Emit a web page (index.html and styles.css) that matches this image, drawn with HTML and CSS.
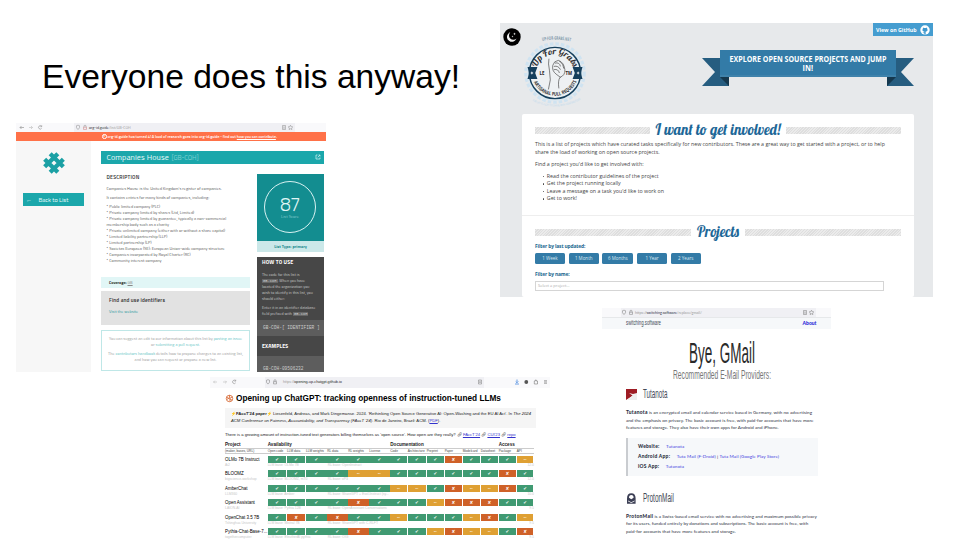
FILE: index.html
```
<!DOCTYPE html>
<html lang="en">
<head>
<meta charset="utf-8">
<title>Everyone does this anyway!</title>
<link rel="stylesheet" href="styles.css">
</head>
<body>
<main class="slide">
<h1 class="slide-title">Everyone does this anyway!</h1>

<section class="shot org">
  <div class="org-bar">
    <svg class="nav" viewBox="0 0 30 9"><g fill="none" stroke="#888" stroke-width=".6"><path d="M8 4.500H4M5.500 3 4 4.500 5.500 6"/><path stroke="#bbb" d="M13 4.500h3.500M15 3l1.500 1.500L15 6"/><path d="M25.500 3.200a1.700 1.700 0 1 0 .1 2.200M25.700 2.300v1.400h-1.400"/></g></svg>
    <div class="org-url">
      <svg class="lock" viewBox="0 0 14 9"><g fill="none" stroke="#888" stroke-width=".5"><path d="M1.500 2.700 3 2.200l1.500.5v2Q4 6 3 6.500 2 6 1.500 4.700z"/><path d="M9 4.200v-1a1 1 0 0 1 2 0v1"/><path stroke="#c77" d="M8.500 4.200h3v2.200h-3z"/></g></svg>
      <span>org-id.guide<i>/list/GB-COH</i></span>
      <svg class="star" viewBox="0 0 14 9"><g fill="none" stroke="#888" stroke-width=".5"><path d="M1.500 2.500h3v4h-3zM2.200 4h1.600M2.200 5.200h1.600"/><path d="m9.500 2.200.7 1.500 1.600.2-1.200 1.100.3 1.600-1.400-.8-1.400.8.3-1.600-1.200-1.100 1.600-.2z"/></g></svg>
    </div>
  </div>
  <div class="org-alert"><b class="info">i</b><span>org-id.guide has turned 4! A load of research goes into org-id.guide - find out <u>how you can contribute</u>.</span></div>
  <div class="org-body">
    <aside class="org-side">
      <svg class="org-logo" viewBox="0 0 24 24"><g transform="rotate(45 12 12)" stroke="#1ba0a4" stroke-width="4.300" fill="none"><path d="M2.700 8.100h18.600M2.700 15.900h18.600M8.100 2.700v18.600M15.900 2.700v18.600"/></g></svg>
      <div class="back"><span>←</span>Back to List</div>
    </aside>
    <div class="org-main">
      <header class="org-head"><span>Companies House</span><em>[GB-COH]</em><svg viewBox="0 0 6 6"><path fill="none" stroke="#d8f3f3" stroke-width=".7" d="M2.500 1H1v4h4V3.500M3.500 1H5v1.500M5 1 2.700 3.300"/></svg></header>
      <div class="org-cols">
        <article class="org-text">
          <h2>DESCRIPTION</h2>
          <p class="d1">Companies House is the United Kingdom's register of companies.</p>
          <p class="d2">It contains entries for many kinds of companies, including:</p>
          <p class="list">* Public limited company (PLC)<br>* Private company limited by shares (Ltd, Limited)<br>* Private company limited by guarantee, typically a non-commercial<br>membership body such as a charity<br>* Private unlimited company (either with or without a share capital)<br>* Limited liability partnership (LLP)<br>* Limited partnership (LP)<br>* Societas Europaea (SE): European Union-wide company structure<br>* Companies incorporated by Royal Charter (RC)<br>* Community interest company</p>
          <div class="cover"><b>Coverage:</b> <u>GB</u></div>
          <div class="find"><b>Find and use identifiers</b><a>Visit the website</a></div>
          <div class="suggest"><p>You can suggest an edit to our information about this list by <a>posting an issue</a><br>or <a>submitting a pull request</a>.</p><p>The <a>contributors handbook</a> details how to propose changes to an existing list,<br>and how you can request or propose a new list.</p></div>
        </article>
        <aside class="org-info">
          <div class="score"><div class="ring"><strong>87</strong><span>List Score</span></div></div>
          <div class="type">List Type: primary</div>
          <div class="how">
            <h3>HOW TO USE</h3>
            <p>The code for this list is<br><code>GB-COH</code>. When you have<br>located the organization you<br>wish to identify in this list, you<br>should either:</p>
            <p>Enter it in an identifier database<br>field prefixed with <code>GB-COH</code></p>
          </div>
          <div class="strip">GB-COH-[ IDENTIFIER ]</div>
          <h3 class="ex">EXAMPLES</h3>
          <div class="strip last">GB-COH-09506232</div>
        </aside>
      </div>
    </div>
  </div>
</section>

<section class="shot grabs">
  <header class="g-head">
    <svg class="moon" viewBox="0 0 18 18"><circle cx="9" cy="9" r="8.700" fill="#000"/><path fill="#eee" d="M7.300 4.300a4.900 4.900 0 1 0 6.200 6.300 4.300 4.300 0 0 1-6.200-6.300z"/><path fill="#eee" d="m11.500 4.500.4 1 1 .4-1 .4-.4 1-.4-1-1-.4 1-.4zM9.500 7.500l.3.7.7.3-.7.3-.3.7-.3-.7-.7-.3.7-.3z"/></svg>
    <svg class="badge" viewBox="0 0 60 78">
      <defs><path id="top" d="M13 40a17 17 0 0 1 34 0"/><path id="low" d="M8.800 39.500a21.200 21.200 0 0 0 42.400 0"/><path id="crown" d="M3 15.500Q30 4 57 15.500"/><path id="foot" d="M4 62.500q26 16 52 0"/></defs>
      <circle cx="30" cy="40" r="26.500" fill="none" stroke="#cfe3f1" stroke-width="3" stroke-dasharray="3.200 1.800"/>
      <circle cx="30" cy="40" r="25.500" fill="#dbe8f1"/>
      <circle cx="30" cy="40" r="23.300" fill="#eef1f3" stroke="#153f5c" stroke-width="1.300"/>
      <path fill="#153f5c" d="M5 34.500h9l-2 5.500 2 5.500H5l1.500-5.500zM55 34.500h-9l2 5.500-2 5.500h9l-1.500-5.500z"/>
      <path fill="#fff" d="m9 38.500.5 1 1 .5-1 .5-.5 1-.5-1-1-.5 1-.5zM51 38.500l.5 1 1 .5-1 .5-.5 1-.5-1-1-.5 1-.5z"/>
      <path fill="none" stroke="#444" stroke-width=".6" d="M24 55q3-9 1-17-1.500-7-.5-11M33.500 54q-1-7 1-10 5-2 4.500-7-1-7-6-8.500-4 .5-5 4.500-1 5 3 8l4 3M30 31q4-1 5 3M29 34q4-1 6 3M29 37q4-1 5 3M34 29q4 3 4 7"/>
      <text class="script" font-size="7.800"><textPath href="#top" startOffset="5" textLength="43" lengthAdjust="spacingAndGlyphs">Up For Grabs</textPath></text>
      <text class="cond" font-size="4.600" fill="#333"><textPath href="#low" startOffset="9" textLength="49" lengthAdjust="spacingAndGlyphs">ARTISANAL PULL REQUESTS</textPath></text>
      <text class="cond" font-size="4.400" fill="#8299ac"><textPath href="#crown" startOffset="16" textLength="26" lengthAdjust="spacingAndGlyphs">UP-FOR-GRABS.NET</textPath></text>
      <text font-size="2.600" fill="#b9d8ec"><textPath href="#foot" startOffset="6" textLength="46" lengthAdjust="spacingAndGlyphs">FOR LIFE IS A GIFT TO SHARE WITH CONTRIBUTORS</textPath></text>
      <text class="cond" x="16" y="41.500" font-size="4" fill="#222">LE</text><text class="cond" x="39.500" y="41.500" font-size="4" fill="#222">TM</text>
    </svg>
    <svg class="ribbon" viewBox="0 0 212 37"><path fill="#265d80" d="M0 8h27v28H0l13-14zM212 8h-27v28h27l-13-14z"/><path fill="#15384e" d="M18 27h9v9zM194 27h-9v9z"/><path fill="#337ba7" d="M18 0h176v27H18z"/><path stroke="#6699b8" stroke-width=".5" d="M18 26h176"/>
      <text class="cond" x="27.500" y="11.500" font-size="8.800" fill="#fff" textLength="157" lengthAdjust="spacingAndGlyphs">EXPLORE OPEN SOURCE PROJECTS AND JUMP</text><text class="cond" x="100.500" y="20.500" font-size="8.800" fill="#fff" textLength="10.500" lengthAdjust="spacingAndGlyphs">IN!</text></svg>
    <div class="gh"><span>View on GitHub</span><svg viewBox="0 0 10 10"><circle cx="5" cy="5" r="4.700" fill="#fff"/><path fill="#3d98ce" d="M3 2.500l1 .4h2l1-.4.1 1.100q1.400 2.800-1.500 3.200l.1 2.600H4.300l.1-1.200q-1.500.2-1.700-1 .8.300 1.700.1V6.800Q1.500 6.400 2.900 3.600z"/></svg></div>
  </header>
  <div class="card">
    <div class="rule"><i></i><svg class="inv" viewBox="0 0 136 20"><text class="script" x="5.500" y="14.500" font-size="16" textLength="125" lengthAdjust="spacingAndGlyphs">I want to get involved!</text></svg><i></i></div>
    <p class="intro">This is a list of projects which have curated tasks specifically for new contributors. These are a great way to get started with a project, or to help<br>share the load of working on open source projects.</p>
    <p>Find a project you'd like to get involved with:</p>
    <ul><li>Read the contributor guidelines of the project</li><li>Get the project running locally</li><li>Leave a message on a task you'd like to work on</li><li>Get to work!</li></ul>
    <hr>
    <div class="rule proj"><i></i><svg class="pro" viewBox="0 0 54 20"><text class="script" x="6" y="14" font-size="16" textLength="42" lengthAdjust="spacingAndGlyphs">Projects</text></svg><i></i></div>
    <h4>Filter by last updated:</h4>
    <div class="btns"><span>1 Week</span><span>1 Month</span><span class="wide">6 Months</span><span>1 Year</span><span>2 Years</span></div>
    <h4>Filter by name:</h4>
    <div class="select">Select a project...</div>
  </div>
</section>

<section class="shot gpt">
  <div class="gpt-bar">
    <svg class="nav" viewBox="0 0 30 10"><g fill="none" stroke="#888" stroke-width=".6"><path stroke="#bbb" d="M7 5H3.500M4.800 3.700 3.500 5l1.300 1.300M13 5h3.500M15.200 3.700 16.500 5l-1.300 1.300"/><path d="M25.500 3.700a1.700 1.700 0 1 0 .1 2.200M25.700 2.700v1.400h-1.400"/></g></svg>
    <div class="gpt-url"><svg viewBox="0 0 14 10"><g fill="none" stroke="#777" stroke-width=".5"><path d="M1.500 3.200 3 2.700l1.500.5v2Q4 6.500 3 7 2 6.500 1.500 5.200zM9 4.700v-1a1 1 0 0 1 2 0v1M8.500 4.700h3v2.200h-3z"/></g></svg><span><i>https://</i>opening-up-chatgpt.github.io</span><svg class="end" viewBox="0 0 6 10"><path fill="none" stroke="#777" stroke-width=".5" d="M1.500 3h3v4h-3zM2.200 4.300h1.600M2.200 5.500h1.600"/></svg></div>
    <svg class="tools" viewBox="0 0 36 10"><path fill="none" stroke="#4b8be0" stroke-width=".8" d="M5 2.500v3M3.700 4.500 5 5.800l1.300-1.300M3 7h4"/><circle cx="14.300" cy="5" r="1.900" fill="#555"/><path fill="none" stroke="#777" stroke-width=".6" d="M22.300 4h1v-1h1v1h1.200v3h-3.200zM32 3.700h3M32 5h3M32 6.300h3"/></svg>
  </div>
  <div class="gpt-body">
    <h2><svg viewBox="0 0 10 10"><g fill="none" stroke="#d96f3d" stroke-width="1"><circle cx="5" cy="5" r="3.600"/><path d="M5 1.200v3L2.200 6M8.300 3.200 5.500 4.700v3.700M1.700 3.500 5 5.300 8 7"/></g></svg><span>Opening up ChatGPT: tracking openness of instruction-tuned LLMs</span></h2>
    <div class="cite"><p class="c1"><b class="bolt">⚡</b><b>FAccT'24 paper</b><b class="bolt">⚡</b> Liesenfeld, Andreas, and Mark Dingemanse. 2024. ‘Rethinking Open Source Generative AI: Open-Washing and the EU AI Act’. In <i>The 2024</i></p><p class="c2"><i>ACM Conference on Fairness, Accountability, and Transparency (FAccT ’24)</i>. Rio de Janeiro, Brazil: ACM. (<a>PDF</a>).</p></div>
    <p class="grow">There is a growing amount of instruction-tuned text generators billing themselves as ‘open source’. How open are they really? 🔗︎ <a>FAccT'24</a> 🔗︎ <a>CUI'23</a> 🔗︎ <a>repo</a></p>
    <div class="row groups"><b>Project</b><b class="av">Availability</b><b class="doc">Documentation</b><b>Access</b></div>
    <div class="row heads"><span>(maker, bases, URL)</span><span>Open code</span><span>LLM data</span><span>LLM weights</span><span>RL data</span><span>RL weights</span><span>License</span><span>Code</span><span>Architecture</span><span>Preprint</span><span>Paper</span><span>Modelcard</span><span>Datasheet</span><span>Package</span><span>API</span></div>

    <div class="row cells"><b>OLMo 7B Instruct</b><i class="y">✔</i><i class="y">✔</i><i class="y">✔</i><i class="y">✔</i><i class="y">✔</i><i class="y">✔</i><i class="y">✔</i><i class="y">✔</i><i class="y">✔</i><i class="n">✘</i><i class="y">✔</i><i class="y">✔</i><i class="y">✔</i><i class="p">~</i></div>
    <div class="sub"><span>Ai2</span><span>LLM base: OLMo 7B</span><span>RL base: OpenInstruct</span><em>12.0</em></div>
    <div class="row cells"><b>BLOOMZ</b><i class="y">✔</i><i class="y">✔</i><i class="y">✔</i><i class="y">✔</i><i class="p">~</i><i class="p">~</i><i class="y">✔</i><i class="y">✔</i><i class="y">✔</i><i class="y">✔</i><i class="y">✔</i><i class="y">✔</i><i class="n">✘</i><i class="y">✔</i></div>
    <div class="sub"><span>bigscience-workshop</span><span>LLM base: BLOOMZ, mT0</span><span>RL base: xP3</span><em>12.0</em></div>
    <div class="row cells"><b>AmberChat</b><i class="y">✔</i><i class="y">✔</i><i class="y">✔</i><i class="y">✔</i><i class="y">✔</i><i class="y">✔</i><i class="p">~</i><i class="p">~</i><i class="y">✔</i><i class="n">✘</i><i class="p">~</i><i class="p">~</i><i class="n">✘</i><i class="y">✔</i></div>
    <div class="sub"><span>LLM360</span><span>LLM base: Amber</span><span>RL base: ShareGPT + Evol-Instruct (sy...</span><em>10.0</em></div>
    <div class="row cells"><b>Open Assistant</b><i class="y">✔</i><i class="y">✔</i><i class="y">✔</i><i class="y">✔</i><i class="n">✘</i><i class="y">✔</i><i class="y">✔</i><i class="y">✔</i><i class="p">~</i><i class="n">✘</i><i class="n">✘</i><i class="n">✘</i><i class="y">✔</i><i class="y">✔</i></div>
    <div class="sub"><span>LAION-AI</span><span>LLM base: Pythia 12B</span><span>RL base: OpenAssistant Conversations</span><em>9.5</em></div>
    <div class="row cells"><b>OpenChat 3.5 7B</b><i class="y">✔</i><i class="n">✘</i><i class="y">✔</i><i class="n">✘</i><i class="y">✔</i><i class="y">✔</i><i class="p">~</i><i class="y">✔</i><i class="y">✔</i><i class="y">✔</i><i class="p">~</i><i class="n">✘</i><i class="y">✔</i><i class="p">~</i></div>
    <div class="sub"><span>Tshinghua University</span><span>LLM base: Mistral 7B</span><span>RL base: ShareGPT with C-RLFT</span><em>9.5</em></div>
    <div class="row cells"><b>Pythia-Chat-Base-7...</b><i class="y">✔</i><i class="y">✔</i><i class="y">✔</i><i class="y">✔</i><i class="n">✘</i><i class="y">✔</i><i class="y">✔</i><i class="y">✔</i><i class="p">~</i><i class="n">✘</i><i class="p">~</i><i class="p">~</i><i class="y">✔</i><i class="n">✘</i></div>
    <div class="sub"><span>togethercomputer</span><span>LLM base: EleutherAI pythia</span><span>RL base: OIG</span><em>9.5</em></div>
  </div>
</section>

<section class="shot sw">
  <div class="sw-bar"><div class="sw-url"><svg viewBox="0 0 14 9"><g fill="none" stroke="#777" stroke-width=".5"><path d="M1.500 2.700 3 2.200l1.500.5v2Q4 6 3 6.500 2 6 1.500 4.700zM9 4.200v-1a1 1 0 0 1 2 0v1M8.500 4.200h3v2.200h-3z"/></g></svg><span><i>https://</i>switching.software<i>/replace/gmail/</i></span><svg class="end" viewBox="0 0 14 9"><g fill="none" stroke="#777" stroke-width=".5"><path d="M1.500 2.500h3v4h-3zM2.200 4h1.600M2.200 5.200h1.600"/><path d="m9.500 2.200.7 1.500 1.600.2-1.200 1.100.3 1.600-1.400-.8-1.400.8.3-1.600-1.200-1.100 1.600-.2z"/></g></svg></div></div>
  <header class="sw-head"><svg viewBox="0 0 36 12"><text class="thin" transform="translate(0 8) scale(1 1.250)" font-size="6.500" textLength="35" lengthAdjust="spacingAndGlyphs">switching.software</text></svg><b>About</b></header>
  <div class="sw-body">
    <svg class="bye" viewBox="0 0 100 54"><text class="thin" transform="translate(17 28.500) scale(1 1.900)" font-size="15.500" textLength="66" lengthAdjust="spacingAndGlyphs">Bye, GMail</text><text class="thin" transform="translate(1 45) scale(1 1.500)" font-size="8" textLength="98" lengthAdjust="spacingAndGlyphs">Recommended E-Mail Providers:</text></svg>
    <h3 class="t"><svg class="ic" viewBox="0 0 11 11"><path fill="#9e1c24" d="M0 0h11v5L5.500 7.500 0 11z"/><path fill="#eee" d="M3 4l4 1 4-1v7H1l5.500-4.500z"/></svg><svg class="nm" viewBox="0 0 34 14"><text class="thin" transform="translate(0 11.200) scale(1 1.600)" font-size="7.500" textLength="24.500" lengthAdjust="spacingAndGlyphs">Tutanota</text></svg></h3>
    <p class="t1"><span><b>Tutanota</b> is an encrypted email and calendar service based in Germany, with no advertising</span><br>and the emphasis on privacy. The basic account is free, with paid-for accounts that have more<br>features and storage. They also have their own apps for Android and iPhone.</p>
    <div class="links"><p><b>Website:</b><a>Tutanota</a></p><p><b>Android App:</b><a>Tuta Mail (F-Droid)</a> | <a class="nx">Tuta Mail (Google Play Store)</a></p><p><b>iOS App:</b><a>Tutanota</a></p></div>
    <h3 class="pm"><svg class="ic" viewBox="0 0 11 11"><path fill="#3c3f55" d="M1 5.500Q1 .3 5.300.3T9.600 5.500v5.200H1z"/><path fill="#fff" d="M3 4.800q0-2.700 2.300-2.700t2.300 2.700L5.300 6.200zM2 7.500l3.300 1.800L8.600 7.500v.7L5.300 10 2 8.200z"/></svg><svg class="nm" viewBox="0 0 34 14"><text class="thin" transform="translate(0 11.200) scale(1 1.600)" font-size="7.500" textLength="31" lengthAdjust="spacingAndGlyphs">ProtonMail</text></svg></h3>
    <p class="t2"><span><b>ProtonMail</b> is a Swiss-based email service with no advertising and maximum possible privacy</span><br>for its users, funded entirely by donations and subscriptions. The basic account is free, with<br>paid-for accounts that have more features and storage.</p>
  </div>
</section>
</main>
</body>
</html>
```

FILE: styles.css
```
* { box-sizing: border-box; margin: 0; padding: 0; }
body { background: #fff; font-family: "Liberation Sans", sans-serif; }
svg { display: block; flex: none; overflow: visible; }
i { font-style: normal; }
.slide { position: relative; width: 960px; height: 540px; overflow: hidden; }
.slide-title { padding: 56px 0 0 42px; font-weight: 400; font-size: 33.600px; line-height: 41px; white-space: nowrap; color: #000; }
.shot { position: absolute; overflow: hidden; white-space: nowrap; background: #fff; }

/* org-id.guide */
.org { left: 16px; top: 123px; width: 310px; height: 249px; font-family: "Titillium Web", "Open Sans", sans-serif; color: #555; }
.org-bar { display: flex; height: 9px; background: #f9f9fb; }
.org-bar .nav { width: 30px; height: 9px; margin-right: 28px; }
.org-url { display: flex; align-items: center; width: 221px; background: #f0f0f4; font-size: 3.900px; color: #222; }
.org-url svg { width: 14px; height: 9px; margin-left: 1px; }
.org-url i { color: #999; }
.org-url .star { margin-left: auto; }
.org-alert { display: flex; align-items: center; height: 9px; padding-left: 86px; background: #ff7148; color: #fff; font-size: 3.900px; font-weight: 600; letter-spacing: .015px; }
.info { width: 4.500px; height: 4.500px; margin-right: 1px; border: .6px solid #fff; border-radius: 50%; font-size: 3px; line-height: 3.300px; text-align: center; }
.org-body { display: flex; height: 231px; }
.org-side { width: 75px; background: #f7f7f7; padding: 10px 7px; }
.org-logo { width: 24px; height: 24px; margin: 0 0 18px 18.500px; }
.back { display: flex; align-items: center; height: 13px; background: #1ba7ab; color: #e8fafa; font-size: 6.200px; letter-spacing: -.02px; }
.back span { width: 15.500px; padding-left: 3px; font-size: 6px; }
.org-main { width: 223px; margin-left: 10px; padding-top: 10px; }
.org-head { display: flex; align-items: center; height: 13px; padding: 0 3.500px 0 5.500px; background: #1ba7ab; color: #eafafa; font-size: 8px; letter-spacing: .13px; line-height: 11px; padding-bottom: 1px; }
.org-head em { margin-left: 2.500px; font-style: normal; color: #7bd0d2; font-size: 6.700px; letter-spacing: -.1px; }
.org-head svg { width: 6px; height: 6px; margin-left: auto; }
.org-cols { display: flex; justify-content: space-between; }
.org-text { width: 149px; }
.org-text h2 { padding: 10px 0 0 5.500px; font-size: 5.200px; line-height: 7px; font-weight: 600; color: #333; letter-spacing: .22px; }
.d1, .d2, .list { padding-left: 5.500px; font-size: 4.200px; letter-spacing: .02px; }
.d1 { margin-top: 5px; line-height: 6px; }
.d2 { margin-top: 3px; line-height: 6px; }
.list { margin-top: 2.500px; line-height: 6.080px; }
.cover { height: 11px; margin-top: 12.700px; padding-left: 8px; background: #e1f6f6; font-size: 4.200px; line-height: 11px; letter-spacing: -.02px; color: #333; }
.cover u { color: #888; }
.find { height: 34px; margin-top: 3px; padding: 6.500px 8px; background: #e2e2e2; font-size: 5.300px; line-height: 7px; color: #333; letter-spacing: .13px; }
.find b { font-weight: 600; }
.find a { display: block; margin-top: 4px; font-size: 4.100px; letter-spacing: .03px; }
.org-text a { color: #24979b; }
.suggest { height: 41px; margin-top: 5px; padding-top: 5px; border: 1px solid #bfe7e7; text-align: center; font-size: 4.100px; line-height: 6px; color: #999; letter-spacing: .03px; }
.suggest p { margin-bottom: 2.700px; }
.org-text .suggest a { color: #5cbfc2; }
.org-info { width: 67px; margin-top: 10px; }
.score { height: 67px; padding: 7px; background: #138d90; }
.ring { display: flex; flex-direction: column; align-items: center; width: 52px; height: 52px; border: 1.300px solid #d8f2f2; border-radius: 50%; color: #e0f6f6; }
.ring strong { margin-top: 12px; font-weight: 300; font-size: 18.500px; line-height: 20px; letter-spacing: -.5px; }
.ring span { font-size: 4.400px; line-height: 5px; color: #8accce; }
.type { height: 11px; background: #cbe8e9; color: #17898c; font-size: 4.200px; line-height: 11px; font-weight: 700; text-align: center; letter-spacing: .03px; }
.how { height: 63px; margin-top: 5px; padding-left: 5px; background: #474747; color: #ccc; font-size: 3.900px; line-height: 6.150px; letter-spacing: .04px; }
.how h3, .ex { font-size: 5.300px; line-height: 10px; font-weight: 700; color: #fff; letter-spacing: .15px; }
.how p { margin-top: 2.400px; }
.how h3 + p { margin-top: 4.800px; }
code { padding: 0 1px; background: #666; font: 3.700px/4px "Liberation Mono", monospace; }
.strip { height: 16px; padding-left: 6px; background: #5d5d5d; color: #ccc; font: 4.500px/15px "Liberation Mono", monospace; }
.ex { height: 20px; padding: 5px 0 0 5px; background: #474747; }
.last { line-height: 25px; }

/* up-for-grabs.net */
.grabs { left: 500px; top: 23px; width: 433px; height: 274px; background: #e7e9eb; font-family: "Open Sans", sans-serif; color: #444; }
.g-head { display: flex; height: 91px; }
.moon { width: 18px; height: 18px; margin: 5px 0 0 3px; }
.badge { width: 66px; height: 85.800px; margin: 6px 0 0 .5px; }
.ribbon { width: 212px; height: 37px; margin: 27px 0 0 114px; }
.gh { display: flex; align-items: center; justify-content: flex-end; width: 60.500px; height: 13px; margin-left: -41px; padding-right: 3px; background: #459dd0; color: #fff; font-size: 5.250px; font-weight: 700; }
.gh svg { width: 10px; height: 10px; margin-left: 3.500px; }
.cond { font-family: "Open Sans", sans-serif; font-weight: 700; }
.script { font-family: "Lobster", "Liberation Serif", serif; font-weight: 400; fill: #1d6797; }
.badge .script { fill: #333; }
.card { width: 392px; height: 183px; margin-left: 22px; padding: 6px 13px 0; background: #fff; border-radius: 2px; font-size: 5.280px; line-height: 7.400px; }
.rule { display: flex; align-items: center; height: 20px; }
.rule i { flex: 1; height: 7px; background: repeating-linear-gradient(135deg, #dedede 0 1px, #ebebeb 1px 2px); }
.inv { width: 136px; height: 20px; }
.pro { width: 54px; height: 20px; }
.card p { margin-bottom: 4.400px; }
.card .intro { margin-top: 1.300px; }
ul { list-style: none; margin-top: 4.800px; }
li { display: flex; align-items: center; padding-left: 7.500px; line-height: 7.530px; }
li::before { content: ""; width: 1.800px; height: 1.800px; margin-right: 2.500px; border-radius: 50%; background: #444; }
hr { height: 1px; margin: 12.500px -13px 6.500px; border: 0; background: #eee; }
h4 { font-size: 4.900px; line-height: 7px; letter-spacing: -.14px; color: #21678f; }
.btns { display: flex; gap: 3.700px; margin: 3px 0 7px; }
.btns span { width: 30px; height: 11.500px; border-radius: 1.500px; background: #337ba7; color: #d9e8f1; font-size: 4.500px; line-height: 11.500px; text-align: center; }
.btns .wide { width: 31px; }
.select { width: 349px; height: 10.500px; margin-top: 2.500px; padding-left: 2px; border: 1px solid #d5d5d5; font-size: 4px; line-height: 8.500px; color: #aaa; }

/* opening-up-chatgpt */
.gpt { left: 210px; top: 377px; width: 340px; height: 163px; color: #222; }
.gpt-bar { display: flex; height: 10.500px; background: #f9f9fb; font-size: 3.750px; }
.gpt-bar .nav { width: 30px; height: 10px; }
.gpt-url { display: flex; align-items: center; width: 219px; margin-left: 25px; background: #f0f0f4; }
.gpt-url svg { width: 14px; height: 10px; }
.gpt-url span { margin-left: 4px; }
.gpt-url i, .sw-url i { color: #999; }
.gpt-url .end { width: 6px; margin: 0 1px 0 auto; }
.tools { width: 36px; height: 10px; margin-left: 28px; }
.gpt-body { padding: 4px 15px 0; }
.gpt h2 { display: flex; align-items: center; height: 13px; font-size: 8.280px; color: #000; }
.gpt h2 svg { width: 9px; height: 9px; margin-right: 2px; }
.cite { height: 20px; margin-top: 3px; padding: 3.500px 6px 0; width: 311px; background: #f5f5f5; font-size: 4.190px; line-height: 6.500px; }
.cite i { font-style: italic; }
.bolt { color: #f0b23c; font-size: 4px; }
.gpt a { color: #33c; text-decoration: underline; }
.grow { margin: 4px 0 3.500px; font-size: 4.180px; line-height: 6px; }
.row { display: grid; grid-template-columns: 42.700px 19.300px 19px 21.300px 21px 21px 21px 17.400px 19px 18px 18px 18px 18px 18px 17.300px; }
.groups { height: 7px; font-size: 4.600px; line-height: 7px; }
.groups .av { grid-column: 2 / 8; }
.groups .doc { grid-column: 8 / 14; }
.heads { width: 309px; height: 5.500px; border: .5px solid #ccc; border-width: 1px 0; font-size: 3.200px; line-height: 4px; color: #444; }
.cells { height: 7px; margin-top: 2px; font-size: 4.450px; line-height: 7px; }
.cells b { font-weight: 400; color: #000; }
.cells i { margin-right: .6px; color: #fff; font: 4.500px/7px "DejaVu Sans", sans-serif; text-align: center; }
.y { background: #409a72; }
.n { background: #cf6128; }
.p { background: #dfa033; }
.sub { display: flex; width: 309px; height: 5.500px; font-size: 3.400px; line-height: 5.500px; color: #c8c8c8; }
.sub span:first-child { width: 42.700px; }
.sub span:nth-child(2) { width: 60px; }
.sub em { margin-left: auto; font-style: normal; }

/* switching.software */
.sw { left: 602px; top: 308px; width: 229px; height: 232px; font-family: Lato, sans-serif; color: #2d3142; }
.sw-bar { height: 8.500px; padding-left: 19px; background: #f9f9fb; }
.sw-url { display: flex; align-items: center; width: 195px; height: 8.500px; background: #f0f0f4; font-size: 3.700px; }
.sw-url svg { width: 14px; height: 9px; }
.sw-url .end { margin-left: auto; }
.sw-head { display: flex; align-items: center; justify-content: space-between; height: 12px; padding: 0 14.500px 0 24px; border-top: 1px solid #e6e8ea; background: #f6f8fa; font-size: 5px; color: #2b2bd8; }
.sw-head svg { width: 36px; height: 12px; }
.sw-head b { font-weight: 900; }
.thin { font-family: "Liberation Sans Narrow", "Liberation Sans", sans-serif; font-weight: 400; fill: #444b58; }
.sw-body { padding-left: 24px; }
.bye { width: 100px; height: 54px; margin: 5px 0 0 46px; }
.bye text:first-child { fill: #2a2a2a; }
.bye text:last-child { fill: #777; }
.sw h3 { display: flex; align-items: center; height: 14px; }
.ic { width: 11px; height: 11px; margin-right: 5.500px; }
.nm { width: 34px; height: 14px; }
.sw p { font-size: 4.550px; line-height: 7.500px; letter-spacing: .02px; }
.sw b { font-weight: 900; }
.sw p b { font-size: 4.900px; line-height: 1; letter-spacing: .27px; }
.sw p span { letter-spacing: .03px; }
.sw .t { margin-top: -.5px; }
.t1 { margin-top: 8px; }
.links { width: 192px; height: 38px; margin-top: 6.500px; padding: 4.300px 0 0 10px; border-left: 2.500px solid #c9ccd0; background: #f6f8fa; }
.sw .links p { line-height: 9.850px; letter-spacing: .09px; }
.links a { margin-left: 6.500px; color: #4343e0; }
.links a.nx { margin-left: 0; }
.pm { margin-top: 15px; }
.t2 { margin-top: 7.500px; }
```
